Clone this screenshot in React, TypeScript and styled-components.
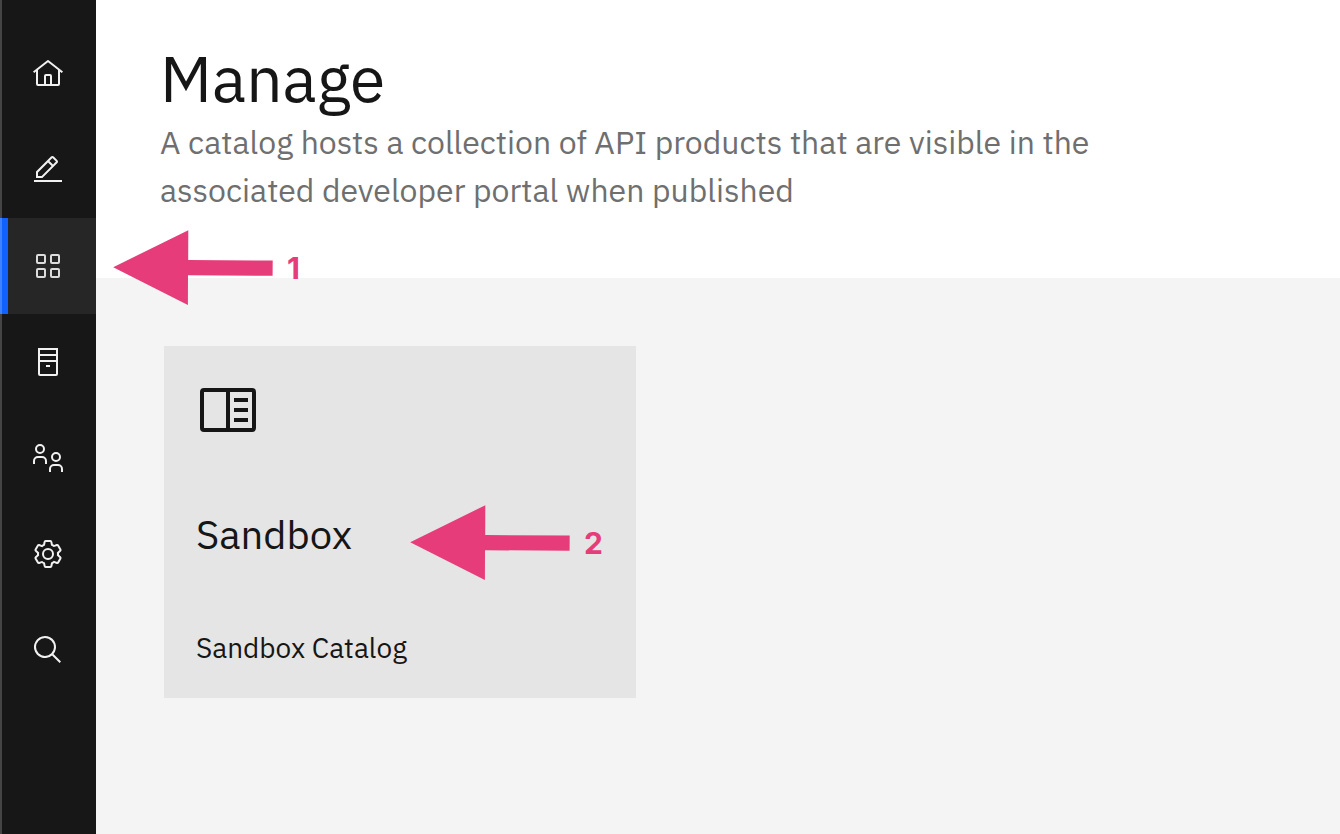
import React from "react";
import styled, { createGlobalStyle } from "styled-components";

const GlobalStyle = createGlobalStyle`
  *, *::before, *::after { box-sizing: border-box; }
  body {
    margin: 0;
    background: #f4f4f4;
    color: #161616;
    font-family: "IBM Plex Sans", "Open Sans", "Noto Sans", sans-serif;
  }
`;

const Shell = styled.div`
  display: flex;
  min-height: 100vh;
`;

const SideNav = styled.nav`
  position: relative;
  flex: none;
  width: 96px;
  padding-top: 26px;
  background: #171717;

  &::before {
    content: "";
    position: absolute;
    z-index: 1;
    top: 0;
    bottom: 0;
    left: 0;
    width: 2px;
    background: rgba(255, 255, 255, 0.2);
  }
`;

const NavList = styled.ul`
  margin: 0;
  padding: 0;
  list-style: none;
`;

const NavItem = styled.li`
  position: relative;
`;

const NavLink = styled.a<{ $active?: boolean }>`
  display: flex;
  align-items: center;
  justify-content: center;
  height: 96px;
  color: ${(p) => (p.$active ? "#dcdcdc" : "#f1f1f1")};
  background: ${(p) => (p.$active ? "#262626" : "transparent")};
  box-shadow: ${(p) => (p.$active ? "inset 8px 0 0 #0f62fe" : "none")};
`;

const Icon = styled.svg<{ $size: number }>`
  display: block;
  width: ${(p) => p.$size}px;
  height: ${(p) => p.$size}px;
  fill: currentColor;
`;

const Main = styled.main`
  flex: 1;
  min-width: 0;
`;

const PageHeader = styled.header`
  padding: 38px 64px 64px;
  background: #ffffff;
`;

const Title = styled.h1`
  margin: 0;
  font-size: 64px;
  font-weight: 400;
  line-height: 80px;
`;

const Description = styled.p`
  max-width: 960px;
  margin: 0;
  color: #6f6f6f;
  font-size: 32px;
  line-height: 48px;
`;

const Catalogs = styled.section`
  display: flex;
  flex-wrap: wrap;
  gap: 32px;
  padding: 68px;
`;

const Card = styled.a`
  position: relative;
  display: flex;
  flex-direction: column;
  width: 472px;
  min-height: 352px;
  padding: 32px;
  background: #e5e5e5;
  color: #161616;
  text-decoration: none;
`;

const CardTitle = styled.h2`
  margin: 64px 0 0;
  font-size: 40px;
  font-weight: 400;
  line-height: 56px;
`;

const CardCaption = styled.p`
  margin: auto 0 0;
  font-size: 28px;
  line-height: 36px;
`;

const Callout = styled.div<{ $left: number; $top: number }>`
  position: absolute;
  z-index: 2;
  left: ${(p) => p.$left}px;
  top: ${(p) => p.$top}px;
  display: flex;
  align-items: center;
  gap: 14px;
  color: #e73c7a;
  font-family: Inter, "Liberation Sans", sans-serif;
  font-size: 30px;
  font-weight: 700;
  line-height: 36px;
  pointer-events: none;
`;

const Arrow = styled.svg`
  display: block;
  width: 160px;
  height: 76px;
  fill: currentColor;
`;

function Step({ n, left, top }: { n: number; left: number; top: number }) {
  return (
    <Callout $left={left} $top={top}>
      <Arrow viewBox="0 0 160 76" aria-hidden="true">
        <path d="M0.2 37.2L75.3 0.2L75.2 30.1L159.7 30.6L159.6 45.8L75 45.2L74.9 75Z" />
      </Arrow>
      <span>{n}</span>
    </Callout>
  );
}

const icons = {
  home: (
    <path d="M16.6123,2.2138a1.01,1.01,0,0,0-1.2427,0L1,13.4194l1.2427,1.5717L4,13.621V26a2.0041,2.0041,0,0,0,2,2H26a2.0037,2.0037,0,0,0,2-2V13.63L29.7573,15,31,13.4282ZM18,26H14V18h4Zm2,0V18a2.0023,2.0023,0,0,0-2-2H14a2.002,2.002,0,0,0-2,2v8H6V12.0615l10-7.79,10,7.8005V26Z" />
  ),
  edit: (
    <path d="M2 26H30V28H2ZM25.4 9c.8-.8.8-2 0-2.8l-3.6-3.6c-.8-.8-2-.8-2.8 0l-15 15V24h6.4L25.4 9zM20.4 4L24 7.6l-3 3L17.4 7l3-3zM6 22v-3.6l10-10 3.6 3.6-10 10H6z" />
  ),
  grid: (
    <path d="M12,4H6A2,2,0,0,0,4,6v6a2,2,0,0,0,2,2h6a2,2,0,0,0,2-2V6A2,2,0,0,0,12,4Zm0,8H6V6h6ZM26,4H20a2,2,0,0,0-2,2v6a2,2,0,0,0,2,2h6a2,2,0,0,0,2-2V6A2,2,0,0,0,26,4Zm0,8H20V6h6ZM12,18H6a2,2,0,0,0-2,2v6a2,2,0,0,0,2,2h6a2,2,0,0,0,2-2V20A2,2,0,0,0,12,18Zm0,8H6V20h6ZM26,18H20a2,2,0,0,0-2,2v6a2,2,0,0,0,2,2h6a2,2,0,0,0,2-2V20A2,2,0,0,0,26,18Zm0,8H20V20h6Z" />
  ),
  server: (
    <path d="M14 19H18V21H14ZM6 2V28a2 2 0 0 0 2 2H24a2 2 0 0 0 2-2V2ZM24 28H8V16H24ZM24 14H8V10H24ZM24 8H8V4H24Z" />
  ),
  people: (
    <path d="M8 2a5 5 0 1 0 5 5A5 5 0 0 0 8 2ZM8 10a3 3 0 1 1 3-3A3 3 0 0 1 8 10ZM6 14H10a5 5 0 0 1 5 5V22H13V19a3 3 0 0 0-3-3H6a3 3 0 0 0-3 3V22H1V19a5 5 0 0 1 5-5ZM24 10a5 5 0 1 0 5 5A5 5 0 0 0 24 10ZM24 18a3 3 0 1 1 3-3A3 3 0 0 1 24 18ZM22 22H26a5 5 0 0 1 5 5V30H29V27a3 3 0 0 0-3-3H22a3 3 0 0 0-3 3V30H17V27a5 5 0 0 1 5-5Z" />
  ),
  settings: (
    <>
      <path d="M27,16.76c0-.25,0-.5,0-.76s0-.51,0-.77l1.92-1.68A2,2,0,0,0,29.3,11L26.94,7a2,2,0,0,0-1.73-1,2,2,0,0,0-.64.1l-2.43.82a11.35,11.35,0,0,0-1.31-.75l-.51-2.52a2,2,0,0,0-2-1.61H13.64a2,2,0,0,0-2,1.61l-.51,2.52a11.48,11.48,0,0,0-1.32.75L7.43,6.06A2,2,0,0,0,6.79,6,2,2,0,0,0,5.06,7L2.7,11a2,2,0,0,0,.41,2.51L5,15.24c0,.25,0,.5,0,.76s0,.51,0,.77L3.11,18.45A2,2,0,0,0,2.7,21L5.06,25a2,2,0,0,0,1.73,1,2,2,0,0,0,.64-.1l2.43-.82a11.35,11.35,0,0,0,1.31.75l.51,2.52a2,2,0,0,0,2,1.61h4.72a2,2,0,0,0,2-1.61l.51-2.52a11.48,11.48,0,0,0,1.32-.75l2.42.82a2,2,0,0,0,.64.1,2,2,0,0,0,1.73-1L29.3,21a2,2,0,0,0-.41-2.51ZM25.21,24l-3.43-1.16a8.86,8.86,0,0,1-2.71,1.57L18.36,28H13.64l-.71-3.55a9.36,9.36,0,0,1-2.7-1.57L6.79,24,4.43,20l2.72-2.4a8.9,8.9,0,0,1,0-3.13L4.43,12,6.79,8l3.43,1.16a8.86,8.86,0,0,1,2.71-1.57L13.64,4h4.72l.71,3.55a9.36,9.36,0,0,1,2.7,1.57L25.21,8,27.57,12l-2.72,2.4a8.9,8.9,0,0,1,0,3.13L27.57,20Z" />
      <path d="M16,22a6,6,0,1,1,6-6A5.94,5.94,0,0,1,16,22Zm0-10a4,4,0,1,0,4,4A4,4,0,0,0,16,12Z" />
    </>
  ),
  search: (
    <path d="M29,27.5859l-7.5521-7.5521a11.0177,11.0177,0,1,0-1.4141,1.4141L27.5859,29ZM4,13a9,9,0,1,1,9,9A9.01,9.01,0,0,1,4,13Z" />
  ),
  catalog: (
    <path d="M19 10H26V12H19ZM19 15H26V17H19ZM19 20H26V22H19ZM28 5H4A2 2 0 0 0 2 7V25a2 2 0 0 0 2 2H28a2 2 0 0 0 2-2V7A2 2 0 0 0 28 5ZM4 7H15V25H4ZM17 25V7H28V25Z" />
  ),
};

type IconName = keyof typeof icons;

function Glyph({ name, size = 32 }: { name: IconName; size?: number }) {
  return (
    <Icon $size={size} viewBox="0 0 32 32" aria-hidden="true">
      {icons[name]}
    </Icon>
  );
}

const navItems: { icon: IconName; label: string; active?: boolean }[] = [
  { icon: "home", label: "Home" },
  { icon: "edit", label: "Develop" },
  { icon: "grid", label: "Manage", active: true },
  { icon: "server", label: "Resources" },
  { icon: "people", label: "Members" },
  { icon: "settings", label: "Settings" },
  { icon: "search", label: "Search" },
];

export default function App() {
  return (
    <>
      <GlobalStyle />
      <Shell>
        <SideNav aria-label="Main">
          <NavList>
            {navItems.map((item) => (
              <NavItem key={item.icon}>
                <NavLink
                  href="#"
                  aria-label={item.label}
                  aria-current={item.active ? "page" : undefined}
                  $active={item.active}
                >
                  <Glyph name={item.icon} />
                </NavLink>
                {item.active && <Step n={1} left={113} top={12} />}
              </NavItem>
            ))}
          </NavList>
        </SideNav>
        <Main>
          <PageHeader>
            <Title>Manage</Title>
            <Description>
              A catalog hosts a collection of API products that are visible in
              the associated developer portal when published
            </Description>
          </PageHeader>
          <Catalogs>
            <Card href="#">
              <Glyph name="catalog" size={64} />
              <CardTitle>Sandbox</CardTitle>
              <CardCaption>Sandbox Catalog</CardCaption>
              <Step n={2} left={246} top={159} />
            </Card>
          </Catalogs>
        </Main>
      </Shell>
    </>
  );
}
